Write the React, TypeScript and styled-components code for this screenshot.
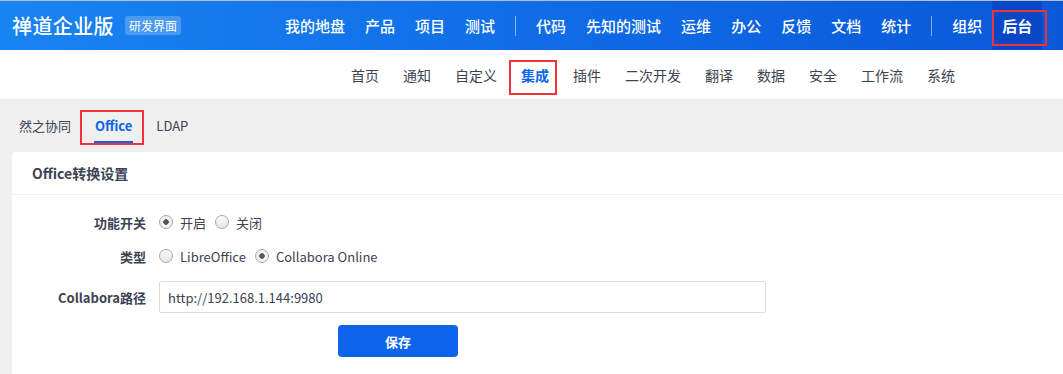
import styled, { createGlobalStyle } from "styled-components";

const GlobalStyle = createGlobalStyle`
  html, body {
    margin: 0;
    padding: 0;
    background: #efefef;
    font-family: "Noto Sans CJK SC", "Noto Sans", sans-serif;
    color: #3c4353;
  }
  * { box-sizing: border-box; }
`;

const Header = styled.header`
  height: 50px;
  display: flex;
  align-items: center;
  padding-left: 12px;
  border-top: 1px solid #b4bfd2;
  background: linear-gradient(90deg, #1884f1 0%, #0f6ae6 55%, #0a58d8 100%);
  color: #fff;
`;

const Logo = styled.div`
  font-size: 20px;
  font-weight: 500;
  letter-spacing: 0.4px;
`;

const Badge = styled.span`
  margin-left: 11px;
  padding: 1px 4px;
  font-size: 12px;
  border-radius: 3px;
  background: rgba(255, 255, 255, 0.22);
`;

const MainNav = styled.nav`
  display: flex;
  align-items: stretch;
  height: 100%;
  margin-left: 94px;
`;

const NavItem = styled.a<{ $active?: boolean }>`
  position: relative;
  display: flex;
  align-items: center;
  padding: 0 10px;
  font-size: 15px;
  font-weight: ${(p) => (p.$active ? 700 : 500)};
  color: #fff;
  background: ${(p) => (p.$active ? "#0848c6" : "transparent")};
`;

const NavDivider = styled.span`
  width: 1px;
  height: 20px;
  align-self: center;
  margin: 0 10px;
  background: rgba(255, 255, 255, 0.5);
`;

const Mark = styled.span<{ $w: number; $h: number; $t: number; $l: number }>`
  position: absolute;
  top: ${(p) => p.$t}px;
  left: ${(p) => p.$l}px;
  width: ${(p) => p.$w}px;
  height: ${(p) => p.$h}px;
  border: 2px solid #f0333a;
  pointer-events: none;
`;

const SubNav = styled.nav`
  height: 50px;
  display: flex;
  align-items: center;
  padding-left: 339px;
  background: #fff;
  border-bottom: 1px solid #e6e6e6;
`;

const SubItem = styled.a<{ $active?: boolean }>`
  position: relative;
  padding: 0 12px;
  font-size: 14px;
  line-height: 20px;
  font-weight: ${(p) => (p.$active ? 700 : 400)};
  color: ${(p) => (p.$active ? "#0c64eb" : "#3c4353")};
`;

const Tabs = styled.div`
  height: 52px;
  display: flex;
  align-items: center;
  padding-left: 7px;
`;

const Tab = styled.a<{ $active?: boolean }>`
  position: relative;
  padding: 0 12px;
  font-size: 13px;
  line-height: 20px;
  font-weight: ${(p) => (p.$active ? 700 : 400)};
  color: ${(p) => (p.$active ? "#0c64eb" : "#3c4353")};

  &::after {
    content: "";
    display: ${(p) => (p.$active ? "block" : "none")};
    position: absolute;
    left: 11px;
    right: 11px;
    bottom: -7px;
    height: 2px;
    background: #0c64eb;
  }
`;

const Panel = styled.section`
  margin-left: 12px;
  background: #fff;
  border-radius: 4px 0 0 0;
  min-height: 230px;
`;

const PanelTitle = styled.h2`
  margin: 0;
  height: 43px;
  display: flex;
  align-items: center;
  padding-left: 20px;
  font-size: 14px;
  font-weight: 700;
  border-bottom: 1px solid #eee;
`;

const Form = styled.div`
  padding-top: 13px;
  display: flex;
  flex-direction: column;
`;

const Row = styled.div<{ $h: number }>`
  display: flex;
  align-items: center;
  height: ${(p) => p.$h}px;
`;

const Label = styled.label`
  width: 134px;
  text-align: right;
  font-size: 13px;
  font-weight: 700;
`;

const Field = styled.div`
  margin-left: 13px;
  display: flex;
  align-items: center;
`;

const Radio = styled.span<{ $checked?: boolean }>`
  display: flex;
  align-items: center;
  margin-right: 9px;
  font-size: 13px;

  &::before {
    content: "";
    width: 12px;
    height: 12px;
    margin-right: 7px;
    border-radius: 50%;
    border: 1px solid #a8a8a8;
    background: ${(p) =>
      p.$checked
        ? "radial-gradient(circle, #555 0 2.5px, #f2f2f2 3px)"
        : "linear-gradient(#fafafa, #e6e6e6)"};
  }
`;

const Input = styled.input`
  width: 607px;
  height: 32px;
  margin-left: 13px;
  padding: 0 8px;
  border: 1px solid #dcdcdc;
  border-radius: 2px;
  font-family: inherit;
  font-size: 13px;
  color: #3c4353;
  outline: none;
`;

const Button = styled.button`
  margin-left: 326px;
  width: 120px;
  height: 32px;
  border: none;
  border-radius: 4px;
  background: #0c64eb;
  color: #fff;
  font-family: inherit;
  font-size: 13px;
  font-weight: 700;
`;

const mainNav = ["我的地盘", "产品", "项目", "测试", "|", "代码", "先知的测试", "运维", "办公", "反馈", "文档", "统计", "|", "组织"];
const subNav = ["首页", "通知", "自定义", "集成", "插件", "二次开发", "翻译", "数据", "安全", "工作流", "系统"];

export default function App() {
  return (
    <>
      <GlobalStyle />
      <Header>
        <Logo>禅道企业版</Logo>
        <Badge>研发界面</Badge>
        <MainNav>
          {mainNav.map((n, i) =>
            n === "|" ? <NavDivider key={i} /> : <NavItem key={i}>{n}</NavItem>
          )}
          <NavItem $active>
            后台
            <Mark $t={9} $l={0} $w={55} $h={36} />
          </NavItem>
        </MainNav>
      </Header>
      <SubNav>
        {subNav.map((n) =>
          n === "集成" ? (
            <SubItem key={n} $active>
              {n}
              <Mark $t={-5} $l={0} $w={48} $h={35} />
            </SubItem>
          ) : (
            <SubItem key={n}>{n}</SubItem>
          )
        )}
      </SubNav>
      <Tabs>
        <Tab>然之协同</Tab>
        <Tab $active>
          Office
          <Mark $t={-6} $l={-3} $w={64} $h={35} />
        </Tab>
        <Tab>LDAP</Tab>
      </Tabs>
      <Panel>
        <PanelTitle>Office转换设置</PanelTitle>
        <Form>
          <Row $h={28}>
            <Label>功能开关</Label>
            <Field>
              <Radio $checked>开启</Radio>
              <Radio>关闭</Radio>
            </Field>
          </Row>
          <Row $h={40}>
            <Label>类型</Label>
            <Field>
              <Radio>LibreOffice</Radio>
              <Radio $checked>Collabora Online</Radio>
            </Field>
          </Row>
          <Row $h={42}>
            <Label>Collabora路径</Label>
            <Input defaultValue="http://192.168.1.144:9980" />
          </Row>
          <Row $h={46}>
            <Button>保存</Button>
          </Row>
        </Form>
      </Panel>
    </>
  );
}
